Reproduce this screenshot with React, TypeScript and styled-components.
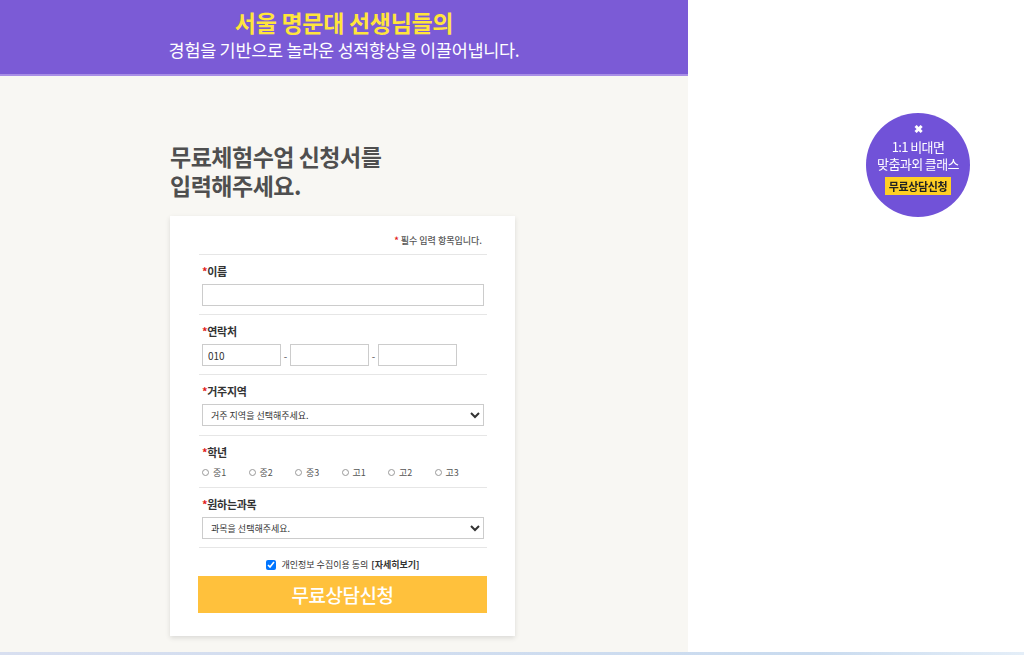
import styled, { createGlobalStyle } from "styled-components";

const GlobalStyle = createGlobalStyle`
  html, body {
    margin: 0;
    padding: 0;
    background: #ffffff;
    font-family: "Noto Sans CJK KR", "Noto Sans", sans-serif;
  }
  * { box-sizing: border-box; }
`;

// 학년 선택지
const grades = ["중1", "중2", "중3", "고1", "고2", "고3"];

const App = () => {
    return (
        <>
            <GlobalStyle />
            <Page>
                <Column>
                    <Header>
                        <HeaderTitle>서울 명문대 선생님들의</HeaderTitle>
                        <HeaderSub>경험을 기반으로 놀라운 성적향상을 이끌어냅니다.</HeaderSub>
                    </Header>
                    <Body>
                        <Title>
                            <TitleLine>무료체험수업 신청서를</TitleLine>
                            <TitleLine>입력해주세요.</TitleLine>
                        </Title>
                        <Card>
                            <Notice><Star>*</Star> 필수 입력 항목입니다.</Notice>
                            <Row bottom={8}>
                                <Label><Star>*</Star>이름</Label>
                                <TextInput width={282} />
                            </Row>
                            <Row bottom={8}>
                                <Label><Star>*</Star>연락처</Label>
                                <PhoneLine>
                                    <TextInput width={79} defaultValue="010" />
                                    <Dash>-</Dash>
                                    <TextInput width={79} />
                                    <Dash>-</Dash>
                                    <TextInput width={79} />
                                </PhoneLine>
                            </Row>
                            <Row bottom={9}>
                                <Label><Star>*</Star>거주지역</Label>
                                <Select>
                                    <option>거주 지역을 선택해주세요.</option>
                                </Select>
                            </Row>
                            <Row bottom={8}>
                                <Label><Star>*</Star>학년</Label>
                                <RadioLine>
                                    {grades.map((g, i) => (
                                        <RadioItem key={i}>
                                            <RadioDot />
                                            {g}
                                        </RadioItem>
                                    ))}
                                </RadioLine>
                            </Row>
                            <Row bottom={8}>
                                <Label><Star>*</Star>원하는과목</Label>
                                <Select>
                                    <option>과목을 선택해주세요.</option>
                                </Select>
                            </Row>
                            <Agree>
                                <Check type="checkbox" defaultChecked />
                                개인정보 수집이용 동의 <b>[자세히보기]</b>
                            </Agree>
                            <SubmitButton>무료상담신청</SubmitButton>
                        </Card>
                    </Body>
                </Column>
                <Aside />
            </Page>
            <BottomBar />
            <FloatBanner>
                <FloatClose>✖</FloatClose>
                <FloatText>1:1 비대면<br />맞춤과외 클래스</FloatText>
                <FloatBadge>무료상담신청</FloatBadge>
            </FloatBanner>
        </>
    );
};

export default App;

// 페이지 전체
const Page = styled.div`
  display: flex;
  height: 652px;
`;

// 왼쪽 컨텐츠 영역
const Column = styled.div`
  width: 688px;
  background-color: #f8f7f3;
  display: flex;
  flex-direction: column;
`;

const Aside = styled.div`
  flex: 1;
  background: #ffffff;
`;

// 상단 헤더
const Header = styled.div`
  height: 76px;
  background-color: #7b5bd6;
  border-bottom: 2px solid #a88ee6;
  display: flex;
  flex-direction: column;
  align-items: center;
  padding-top: 6px;
`;

const HeaderTitle = styled.div`
  color: #ffe53c;
  font-size: 23px;
  font-weight: 700;
  line-height: 32px;
  letter-spacing: -0.3px;
`;

const HeaderSub = styled.div`
  color: #ffffff;
  font-size: 17.5px;
  line-height: 24px;
  letter-spacing: -0.3px;
`;

const Body = styled.div`
  padding: 66px 0 0 170px;
`;

// 타이틀
const Title = styled.h2`
  margin: 0 0 16px 0;
  font-size: 23px;
  font-weight: 700;
  color: #4f4f4f;
  letter-spacing: -0.5px;
`;

const TitleLine = styled.div`
  line-height: 29px;
`;

// 신청서 카드
const Card = styled.div`
  width: 345px;
  height: 420px;
  background: #ffffff;
  box-shadow: 0 2px 5px rgba(0, 0, 0, 0.12);
  padding: 18px 28px 0 29px;
`;

const Notice = styled.div`
  text-align: right;
  font-size: 9px;
  font-weight: 500;
  color: #555;
  padding-right: 5px;
  height: 21px;
  line-height: 14px;
  border-bottom: 1px solid #e6e6e6;
`;

const Star = styled.span`
  color: #e21b1b;
  font-weight: 700;
`;

// 입력 항목 행
const Row = styled.div<{ bottom: number }>`
  border-bottom: 1px solid #e6e6e6;
  padding: 8px 3px ${props => props.bottom}px 3px;
`;

const Label = styled.div`
  font-size: 11px;
  font-weight: 700;
  color: #333;
  line-height: 16px;
  margin-bottom: 5px;
  letter-spacing: -0.3px;
`;

const TextInput = styled.input<{ width: number }>`
  width: ${props => props.width}px;
  height: 22px;
  border: 1px solid #cccccc;
  padding: 0 5px;
  font-size: 10px;
  font-family: "Noto Sans CJK KR", sans-serif;
  color: #333;
  outline: none;
  display: block;
`;

const PhoneLine = styled.div`
  display: flex;
  align-items: center;
`;

const Dash = styled.span`
  width: 9px;
  text-align: center;
  font-size: 10px;
  color: #555;
`;

const Select = styled.select`
  width: 282px;
  height: 22px;
  border: 1px solid #cccccc;
  background: #ffffff;
  font-size: 9px;
  color: #333;
  padding: 0 4px;
  font-family: "Noto Sans CJK KR", sans-serif;
  display: block;
`;

const RadioLine = styled.div`
  display: flex;
  padding-top: 1px;
`;

const RadioItem = styled.label`
  width: 46.5px;
  display: flex;
  align-items: center;
  gap: 4px;
  font-size: 9px;
  color: #555;
`;

const RadioDot = styled.span`
  width: 7px;
  height: 7px;
  border: 1px solid #999;
  border-radius: 50%;
`;

// 개인정보 동의
const Agree = styled.div`
  display: flex;
  align-items: center;
  justify-content: center;
  font-size: 9px;
  color: #333;
  padding: 10px 0 5px;
  gap: 3px;
  & b {
    font-weight: 700;
  }
`;

const Check = styled.input`
  width: 10px;
  height: 10px;
  margin: 0 2px 0 0;
`;

const SubmitButton = styled.div`
  height: 37px;
  background-color: #ffc13c;
  color: #ffffff;
  font-size: 19px;
  font-weight: 500;
  display: flex;
  align-items: center;
  justify-content: center;
  letter-spacing: -0.5px;
  margin-left: -1px;
`;

const BottomBar = styled.div`
  height: 3px;
  background: linear-gradient(to right, #d8dff0, #c9dbef 80%, #e4eef8);
`;

// 오른쪽 플로팅 배너
const FloatBanner = styled.div`
  position: fixed;
  left: 866px;
  top: 113px;
  width: 104px;
  height: 104px;
  border-radius: 50%;
  background-color: #7152d8;
  display: flex;
  flex-direction: column;
  align-items: center;
  padding-top: 8px;
  color: #ffffff;
`;

const FloatClose = styled.div`
  font-size: 11px;
  line-height: 14px;
  font-weight: 700;
`;

const FloatText = styled.div`
  text-align: center;
  font-size: 13px;
  line-height: 17px;
  letter-spacing: -0.6px;
  margin-top: 3px;
`;

const FloatBadge = styled.div`
  margin-top: 5px;
  background-color: #ffcf24;
  color: #222;
  font-size: 11px;
  font-weight: 700;
  padding: 2px 4px;
  line-height: 14px;
  letter-spacing: -0.4px;
`;
